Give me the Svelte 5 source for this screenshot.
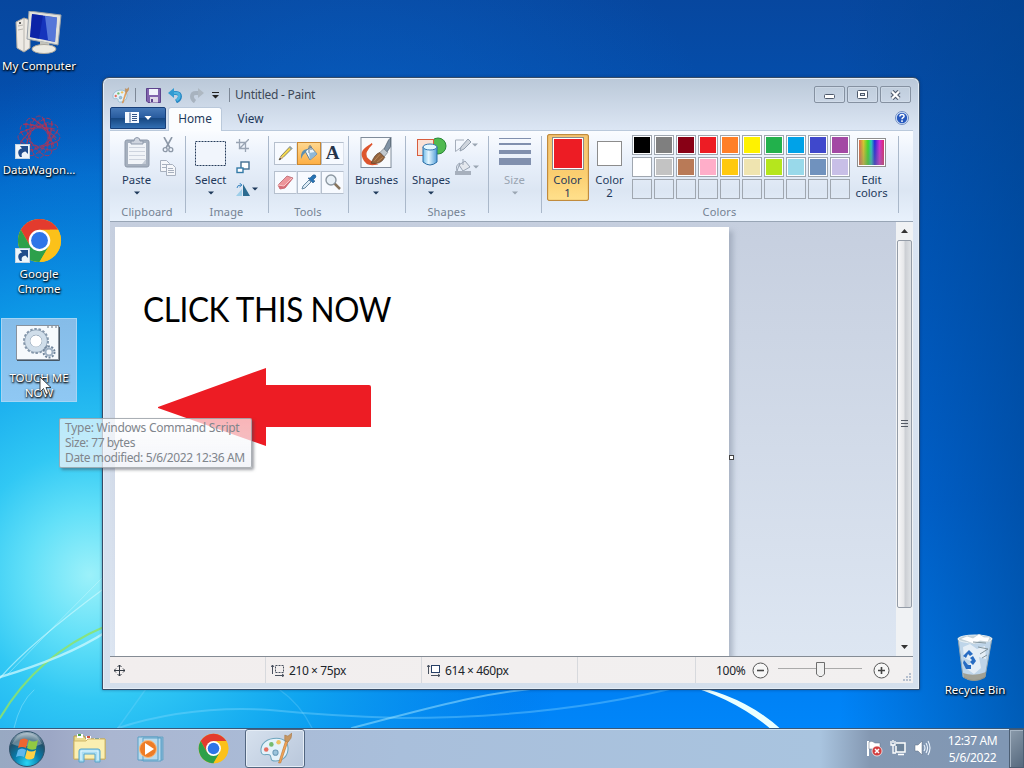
<script lang="ts">
  let activeTab = $state("Home");
  let activeTool = $state("fill");
  let activeColor = $state(1);

  const tabs = ["Home", "View"];
  const tools = ["pencil", "fill", "text", "eraser", "picker", "magnifier"];

  const palette = [
    "#000000", "#7f7f7f", "#880015", "#ed1c24", "#ff7f27",
    "#fff200", "#22b14c", "#00a2e8", "#3f48cc", "#a349a4",
    "#ffffff", "#c3c3c3", "#b97a57", "#ffaec9", "#ffc90e",
    "#efe4b0", "#b5e61d", "#99d9ea", "#7092be", "#c8bfe7",
    "", "", "", "", "", "", "", "", "", "",
  ];

  const shortcuts = [
    { id: "computer", lines: ["My Computer"], linked: false },
    { id: "wagon", lines: ["DataWagon..."], linked: true },
    { id: "chrome", lines: ["Google", "Chrome"], linked: true },
    { id: "script", lines: ["TOUCH ME", "NOW"], linked: false },
  ];
  let selected = $state("script");
</script>

{#snippet chrome(size: number)}
  <svg width={size} height={size} viewBox="0 0 48 48">
    <circle cx="24" cy="24" r="23" fill="#fbc11a" />
    <path d="M4.1 12.5A23 23 0 0 1 43.9 12.5H24L14 29.8Z" fill="#e33b2e" />
    <path d="M4.1 12.5A23 23 0 0 0 24 47L34 29.8L14 29.8Z" fill="#2da04b" />
    <path d="M24 47L34 29.8A11 11 0 0 0 33.5 18L35 12.5H43.9A23 23 0 0 1 24 47Z" fill="#fbc11a" />
    <circle cx="24" cy="24" r="11.5" fill="#fff" />
    <circle cx="24" cy="24" r="9" fill="#2f75e8" />
  </svg>
{/snippet}

{#snippet paintIcon(size: number)}
  <svg width={size} height={size} viewBox="0 0 32 32">
    <path d="M2 19C1 11 8 6 17 6C25 6 29 11 28 18C27 25 21 29 14 28C10 28 13 23 10 22C7 21 3 24 2 19Z" fill="#e4f2fa" stroke="#6ea5bd" stroke-width="1" />
    <circle cx="7" cy="17" r="2.2" fill="#e66d60" />
    <circle cx="12" cy="12" r="2.2" fill="#76bb6f" />
    <circle cx="19" cy="10" r="2.2" fill="#f0c361" />
    <circle cx="16" cy="20" r="2.5" fill="#9bc4dc" stroke="#6d9cb8" />
    <path d="M19 30L26 8L28 9L21 30Z" fill="#f2a456" stroke="#c27d3c" stroke-width=".7" />
    <path d="M25 8L25 3L28 4L32 1L31 6L28 10Z" fill="#c79762" stroke="#a87847" stroke-width=".6" />
  </svg>
{/snippet}

{#snippet caret()}
  <svg class="caret" width="6" height="4" viewBox="0 0 6 4"><path d="M0 .5H6L3 3.5Z" fill="currentColor" /></svg>
{/snippet}

<main class="screen">
  <svg class="wallpaper" width="1024" height="768" viewBox="0 0 1024 768">
    <defs>
      <linearGradient id="sky" x1="0" y1="0" x2="0" y2="1">
        <stop offset="0" stop-color="#07479f" />
        <stop offset=".3" stop-color="#0059bf" />
        <stop offset=".65" stop-color="#0069dc" />
        <stop offset=".95" stop-color="#0086fa" />
      </linearGradient>
      <radialGradient id="glow" gradientUnits="userSpaceOnUse" cx="0" cy="0" r="1" gradientTransform="translate(90 575) scale(480 500)">
        <stop offset="0" stop-color="#9cf1fa" />
        <stop offset=".13" stop-color="#62e0f8" />
        <stop offset=".25" stop-color="#31c8f4" />
        <stop offset=".5" stop-color="#12abef" stop-opacity=".85" />
        <stop offset=".8" stop-color="#078ce9" stop-opacity=".45" />
        <stop offset="1" stop-color="#006cd8" stop-opacity="0" />
      </radialGradient>
      <linearGradient id="rightShade" x1="0" y1="0" x2="1" y2="0">
        <stop offset=".82" stop-color="#00418b" stop-opacity="0" />
        <stop offset="1" stop-color="#00418b" stop-opacity=".6" />
      </linearGradient>
      <radialGradient id="lift" cx=".35" cy=".2" r=".35">
        <stop offset="0" stop-color="#0b69cf" stop-opacity=".5" />
        <stop offset="1" stop-color="#0b69cf" stop-opacity="0" />
      </radialGradient>
    </defs>
    <rect width="1024" height="768" fill="url(#sky)" />
    <rect width="1024" height="768" fill="url(#lift)" />
    <rect width="1024" height="768" fill="url(#rightShade)" />
    <rect width="1024" height="768" fill="url(#glow)" />
    <g fill="none" stroke-linecap="round">
      <path d="M0 718Q37 655 106 626" stroke="#8ee36a" stroke-width="2" opacity=".85" />
      <path d="M0 677Q65 658 106 632" stroke="#d4fbff" stroke-width="2.500" opacity=".7" />
      <path d="M0 678Q28 645 106 587" stroke="#d4fbff" stroke-width="1.200" opacity=".6" />
      <path d="M8 674Q55 625 106 574" stroke="#d4fbff" stroke-width="1" opacity=".4" />
      <path d="M14 728Q20 702 34 690" stroke="#c2f6ff" stroke-width="1" opacity=".35" />
      <path d="M118 728Q190 705 270 710Q330 716 400 718Q560 718 690 684" stroke="#8ddcff" stroke-width="2" opacity=".35" />
      <path d="M118 728Q138 700 148 686M312 728Q300 704 280 690" stroke="#8ddcff" stroke-width="1.500" opacity=".25" />
      <path d="M352 728C430 708 480 692 560 686" stroke="#a3e7ff" stroke-width="2" opacity=".5" />
    </g>
    <path d="M682 684Q742 693 783 731H773Q735 698 682 684Z" fill="#eaffff" />
  </svg>

  <div class="desktop">
    <div class="shortcuts">
      {#each shortcuts as item (item.id)}
        <button class="shortcut" class:selected={selected === item.id} onclick={() => (selected = item.id)}>
          <span class="shortcut-icon">
            {#if item.id === "computer"}
              <svg width="48" height="44" viewBox="0 0 48 44">
                <path d="M1 11L9 7L15 9V37L9 41L2 37Z" fill="#eeeae4" stroke="#a9a69f" />
                <path d="M9 7V40M3 15L8 14M3 19L8 18" stroke="#b9b6b0" />
                <circle cx="5" cy="12" r="1" fill="#333" />
                <path d="M14 0L46 4L43 34L12 28Z" fill="#e2e2dc" stroke="#99a0a8" />
                <path d="M17 3L42 6.500L40 31L15 26Z" fill="#1534bc" />
                <path d="M30 5L42 6.500L40 31L33 29Z" fill="#80a5ed" opacity=".6" />
                <path d="M17 3L28 4.500L24 28L15 26Z" fill="#071b99" opacity=".6" />
                <path d="M25 30L34 32V37H25Z" fill="#c3c3bc" />
                <ellipse cx="29" cy="38" rx="12" ry="4.500" fill="#eceae2" stroke="#aaa79d" />
              </svg>
            {:else if item.id === "wagon"}
              <svg width="46" height="46" viewBox="0 0 46 46">
                <g fill="none" stroke="#b9314f" stroke-width=".8">
                  {#each [0, 30, 60, 90, 120, 150] as turn}
                    <ellipse cx="23" cy="23" rx="21" ry="9" transform="rotate({turn} 23 23)" stroke-dasharray="5 1.500" />
                    <path d="M7 10L38 15M10 37L15 7" transform="rotate({turn} 23 23)" opacity=".65" />
                  {/each}
                </g>
              </svg>
            {:else if item.id === "chrome"}
              {@render chrome(45)}
            {:else}
              <svg class="script-file" width="46" height="38" viewBox="0 0 46 38">
                <rect x="1.500" y="1.500" width="42" height="34" fill="#f6fafd" stroke="#87929e" />
                <path d="M2 36.500H44.500V3" fill="none" stroke="#465663" stroke-width="1" />
                <path d="M32 3H34M36 3H38M40 3H42" stroke="#62717e" />
                <circle cx="21" cy="17" r="12" fill="none" stroke="#8497ab" stroke-width="2" stroke-dasharray="2.500 1.690" />
                <circle cx="21" cy="17" r="8.500" fill="none" stroke="#8699ac" stroke-width="6" />
                <circle cx="21" cy="17" r="8.500" fill="none" stroke="#d0deea" stroke-width="4.700" />
                <circle cx="21" cy="17" r="5.500" fill="#fff" />
                <circle cx="34" cy="28" r="5.500" fill="none" stroke="#71869c" stroke-width="2" stroke-dasharray="2 1.450" />
                <circle cx="34" cy="28" r="3.500" fill="#f5f9fc" stroke="#9eb0c3" stroke-width="2" />
              </svg>
            {/if}
            {#if item.linked}
              <svg class="link-badge" width="15" height="15" viewBox="0 0 15 15">
                <rect x=".5" y=".5" width="14" height="14" fill="#edf5fb" stroke="#c4d5e3" />
                <path d="M5 13C2 9 3 5 7 4.500L5 2H13V10L10.500 7.500C7 8 6 10 7 13Z" fill="#214d8c" />
              </svg>
            {/if}
          </span>
          {#each item.lines as line}
            <span class="shortcut-line">{line}</span>
          {/each}
        </button>
      {/each}
    </div>

    <button class="shortcut recycle">
      <span class="shortcut-icon">
        <svg width="38" height="48" viewBox="0 0 38 48">
          <path d="M2 4L7 43Q18 50 29 43L36 4Z" fill="#dfe9ee" fill-opacity=".85" stroke="#8fa5b3" />
          <path d="M7 39Q18 43 30 38L29 44Q18 50 8 44Z" fill="#978f78" opacity=".75" />
          <ellipse cx="19" cy="5" rx="17" ry="4" fill="#c6d4da" stroke="#e7f0f5" />
          <path d="M4 5L11 2L17 4L23 0L28 3L34 3L32 8L24 7L18 10L10 7Z" fill="#fff" stroke="#b5c5cc" stroke-width=".6" />
          <path d="M7 13L14 10L21 15L29 12L30 25L23 23L25 34L18 40L11 35L15 27L8 24Z" fill="#fff" opacity=".6" />
          <path d="M17 8L30 9M22 13L32 15L24 20M26 24L31 21" stroke="#84959e" fill="none" />
          <g fill="#286cc2">
            <path d="M9 20L13 16L17 20L14 22L12 20L10 24L7 22Z" />
            <path d="M17 22L20 27L17 31L14 28L16 26L14 24Z" />
            <path d="M8 26L12 31L15 31V35H10L7 29Z" />
          </g>
        </svg>
      </span>
      <span class="shortcut-line">Recycle Bin</span>
    </button>

    <section class="window">
      <header class="titlebar">
        <div class="quick">
          {@render paintIcon(17)}
          <i class="divider"></i>
          <svg class="save" width="15" height="15" viewBox="0 0 15 15">
            <path d="M.5.5H14.500V14.500H2L.5 13Z" fill="#8163ad" stroke="#5d438c" />
            <rect x="3" y="1" width="9" height="6" fill="#f0f2fb" />
            <rect x="4" y="9" width="8" height="5.500" fill="#ddd7e8" />
            <rect x="5" y="11" width="2" height="3" fill="#5d438c" />
          </svg>
          <svg class="undo" width="15" height="15" viewBox="0 0 15 15">
            <path d="M4 5H8C13.500 5 13 11 8 13.500" fill="none" stroke="#2484c2" stroke-width="4" />
            <path d="M4 5H8C12.500 5 12.500 10 8.500 12.500" fill="none" stroke="#4bb3e0" stroke-width="2.400" />
            <path d="M0 5L6 0V10Z" fill="#329bd2" />
          </svg>
          <svg class="redo" width="15" height="15" viewBox="0 0 15 15">
            <path d="M11 5H7C1.500 5 2 11 6 13.500" fill="none" stroke="#a8b3bf" stroke-width="3.800" />
            <path d="M15 5L9 0V10Z" fill="#aeb8c2" />
          </svg>
          <svg class="more" width="7" height="7" viewBox="0 0 7 7"><path d="M0 0H7V1H0ZM0 3H7L3.500 6.500Z" fill="#222" /></svg>
          <i class="divider last"></i>
        </div>
        <h1>Untitled - Paint</h1>
        <div class="controls">
          <button aria-label="Minimize"><svg width="12" height="8" viewBox="0 0 12 8"><rect x=".5" y="3.500" width="10" height="4" rx="1" fill="#fff" stroke="#4f5a6c" /></svg></button>
          <button aria-label="Maximize"><svg width="11" height="9" viewBox="0 0 11 9"><rect x=".5" y=".5" width="10" height="8" rx="1" fill="#fff" stroke="#4f5a6c" /><rect x="3.500" y="3.500" width="4" height="2" fill="#d9e1eb" stroke="#4f5a6c" /></svg></button>
          <button aria-label="Close"><svg width="13" height="10" viewBox="0 0 13 10"><path d="M3 1.500L10 8.500M10 1.500L3 8.500" stroke="#4f5a6c" stroke-width="4.400" /><path d="M3 1.500L10 8.500M10 1.500L3 8.500" stroke="#fff" stroke-width="2.300" /></svg></button>
        </div>
      </header>

      <nav class="tabs">
        <button class="file-tab" aria-label="Paint menu">
          <svg width="14" height="11" viewBox="0 0 14 11"><rect width="14" height="11" fill="#f5f9ff" /><path d="M5 .5V10.500M7 2.500H12M7 4.500H12M7 6.500H12M7 8.500H12" stroke="#335589" /></svg>
          <svg width="8" height="4" viewBox="0 0 8 4"><path d="M.5 0H7.500L4 4Z" fill="#fff" /></svg>
        </button>
        {#each tabs as tab}
          <button class="tab" class:active={activeTab === tab} onclick={() => (activeTab = tab)}>{tab}</button>
        {/each}
        <svg class="help" width="14" height="14" viewBox="0 0 14 14">
          <circle cx="7" cy="7" r="6.500" fill="#d9e9fb" stroke="#738ec3" />
          <circle cx="7" cy="7" r="5.200" fill="#2859be" />
          <path d="M4.800 5.500C5 2.500 9.500 3 9 5.600C8.700 6.800 7 6.700 7 8.200M7 9.300V11" fill="none" stroke="#fff" stroke-width="1.500" />
        </svg>
      </nav>

      <div class="ribbon">
        <div class="group">
          <div class="group-body clipboard">
            <button class="large">
              <svg width="26" height="31" viewBox="0 0 26 31">
                <rect x="1" y="3" width="24" height="27" rx="2" fill="#a6b0be" stroke="#8e99aa" />
                <rect x="4" y="6" width="18" height="21" fill="#f1f4f8" />
                <path d="M5 10.500H21M5 14.500H21M5 18.500H21M5 22.500H21" stroke="#ced4de" />
                <path d="M7 7V4H10Q10 .5 13 .5Q16 .5 16 4H19V7Z" fill="#cfd5df" stroke="#8e99aa" />
                <path d="M18 27H22V22Z" fill="#c3cad5" />
              </svg>
              <span>Paste</span>{@render caret()}
            </button>
            <div class="stack">
              <svg width="12" height="16" viewBox="0 0 12 16"><path d="M2 0L8 11M10 0L4 11" stroke="#8d98a7" stroke-width="1.600" /><circle cx="3.200" cy="12.700" r="2" fill="none" stroke="#8d98a7" stroke-width="1.300" /><circle cx="8.800" cy="12.700" r="2" fill="none" stroke="#8d98a7" stroke-width="1.300" /></svg>
              <svg width="16" height="16" viewBox="0 0 16 16"><g fill="#f5f7fa" stroke="#a7b0be"><path d="M.5.5H6.500L9.500 3.500V11.500H.5ZM2 4.500H7M2 7.500H7" /><path d="M6.500 4.500H12.500L15.500 7.500V15.500H6.500ZM8 8.500H13M8 10.500H14M8 12.500H14" /></g></svg>
            </div>
          </div>
          <span class="group-label">Clipboard</span>
        </div>

        <div class="group">
          <div class="group-body image">
            <button class="large">
              <svg width="31" height="31" viewBox="0 0 31 31"><rect x=".5" y="4.500" width="30" height="24" fill="#f1f5fc" stroke="#263c5b" stroke-dasharray="2 1" /></svg>
              <span>Select</span>{@render caret()}
            </button>
            <div class="stack">
              <svg width="13" height="13" viewBox="0 0 13 13"><path d="M3.500 0V9.500H13M0 3.500H9.500V13M3 10L13 0" fill="none" stroke="#99a4b3" stroke-width="1.300" /></svg>
              <svg width="14" height="13" viewBox="0 0 14 13"><rect x="5" y="1" width="8" height="7" fill="#fff" stroke="#426e91" stroke-width="1.400" /><rect x="1" y="7" width="6" height="4.500" fill="#fff" stroke="#347aa7" stroke-width="1.400" /></svg>
              <span class="with-caret"><svg width="14" height="13" viewBox="0 0 14 13"><path d="M6 13H0L6 6Z" fill="#9dcee9" /><path d="M7 1L14 13H7Z" fill="#2b6b91" /><path d="M1 5Q1 2 5 2M3.500 0L6 2L3.500 4" fill="none" stroke="#3c86c0" /></svg>{@render caret()}</span>
            </div>
          </div>
          <span class="group-label">Image</span>
        </div>

        <div class="group">
          <div class="group-body tools">
            {#each tools as tool}
              <button class="tool" class:active={activeTool === tool} aria-label={tool} onclick={() => (activeTool = tool)}>
                {#if tool === "pencil"}
                  <svg width="16" height="16" viewBox="0 0 16 16"><path d="M1 15L3 11L12 1.500L14 3.500L5 12.500Z" fill="#f4d84e" stroke="#6f6b55" stroke-width=".8" /><path d="M3 11L5 13L1 15Z" fill="#e3bb8c" /><path d="M1 15L2 13L3.500 14Z" fill="#222" /><path d="M11 2.500L13 4.500L14 3.500L12 1.500Z" fill="#87a2bc" /></svg>
                {:else if tool === "fill"}
                  <svg width="18" height="17" viewBox="0 0 18 17"><path d="M5 6L11 2L17 9L10 15Z" fill="#edf6fc" stroke="#637f96" /><path d="M9 8L15 7L17 9L10 15Z" fill="#8fb8d8" /><path d="M9 8V2Q9 0 11 1V5" fill="none" stroke="#697e8e" /><path d="M7 4Q0 5 1 14L3 10L6 7Z" fill="#5e8fae" /></svg>
                {:else if tool === "text"}
                  <span class="letter">A</span>
                {:else if tool === "eraser"}
                  <svg width="17" height="15" viewBox="0 0 17 15"><path d="M1 10L10 1L16 3L8 13L3 14Z" fill="#ed969b" stroke="#b96771" stroke-width=".8" /><path d="M1 10L7 11L16 3L8 13L3 14Z" fill="#d66c76" /><path d="M1 10L7 11L15 3" fill="none" stroke="#f9c7c7" /></svg>
                {:else if tool === "picker"}
                  <svg width="16" height="16" viewBox="0 0 16 16"><path d="M1 15L2 12L8 6L10 8L4 14Z" fill="#dceaf4" stroke="#6688a3" /><path d="M7 4L12 9L14 7L12 6L15 3Q15 0 12 1L9 4Z" fill="#2673b5" stroke="#22588b" stroke-width=".6" /></svg>
                {:else}
                  <svg width="16" height="16" viewBox="0 0 16 16"><path d="M9 9L15 15" stroke="#88755d" stroke-width="2.500" /><circle cx="6" cy="6" r="5" fill="#e8f0f7" stroke="#8d98a2" stroke-width="1.400" /></svg>
                {/if}
              </button>
            {/each}
          </div>
          <span class="group-label">Tools</span>
        </div>

        <div class="group">
          <div class="group-body centered">
            <button class="large">
              <svg width="32" height="32" viewBox="0 0 32 32">
                <rect x=".5" y=".5" width="31" height="31" fill="#f8fafc" stroke="#7d8998" />
                <path d="M12 7C3 12 0 16 3 22Q6 30 16 28Q9 25 6 21Q3 16 12 7Z" fill="#dd552d" stroke="#dd552d" stroke-width="1.500" />
                <path d="M24 13L29 3L31 1V10L27 16Z" fill="#8093a5" stroke="#455563" stroke-width=".7" />
                <path d="M20 16L24 12L28 16L24 21Z" fill="#c2c9ce" stroke="#70797f" stroke-width=".7" />
                <path d="M11 27Q15 17 20 16L25 21Q21 29 11 27Z" fill="#95643d" stroke="#5c402b" stroke-width=".7" />
                <path d="M14 25L20 18M17 26L23 21" stroke="#c99a64" stroke-width=".7" />
              </svg>
              <span>Brushes</span>{@render caret()}
            </button>
          </div>
        </div>

        <div class="group">
          <div class="group-body shapes">
            <button class="large">
              <svg width="31" height="31" viewBox="0 0 31 31">
                <defs><linearGradient id="tube"><stop stop-color="#72bce9" /><stop offset=".4" stop-color="#e4f6ff" /><stop offset="1" stop-color="#529dd8" /></linearGradient></defs>
                <circle cx="22" cy="9" r="8" fill="#50ba51" stroke="#298737" />
                <rect x="1.500" y="2.500" width="16" height="16" fill="#fae1d6" stroke="#d85d3e" />
                <path d="M7 10V25Q14 31 21 25V10Z" fill="url(#tube)" stroke="#286ca4" />
                <ellipse cx="14" cy="10" rx="7" ry="3" fill="#e5f8ff" stroke="#3578b1" />
              </svg>
              <span>Shapes</span>{@render caret()}
            </button>
            <div class="stack disabled">
              <span class="with-caret"><svg width="16" height="15" viewBox="0 0 16 15"><path d="M9 2H.5V13.500L8 8" fill="none" stroke="#a5aebb" /><path d="M5 13L6 9L13 1L16 4L9 11Z" fill="#cfd5dd" stroke="#929ead" /></svg>{@render caret()}</span>
              <span class="with-caret"><svg width="17" height="16" viewBox="0 0 17 16"><path d="M4 6L10 2L15 8L8 12Z" fill="#e4e8ee" stroke="#99a4b3" /><path d="M8 6V0M5 4Q0 6 2 12Z" fill="none" stroke="#99a4b3" /><rect y="12" width="16" height="4" fill="#a7b0bd" /></svg>{@render caret()}</span>
            </div>
          </div>
          <span class="group-label">Shapes</span>
        </div>

        <div class="group">
          <div class="group-body centered">
            <button class="large disabled">
              <svg width="32" height="31" viewBox="0 0 32 31" fill="#8190ae"><rect y="1" width="32" height="1" /><rect y="6" width="32" height="2" /><rect y="13" width="32" height="4" /><rect y="21" width="32" height="7" /></svg>
              <span>Size</span>{@render caret()}
            </button>
          </div>
        </div>

        <div class="group">
          <div class="group-body colors">
            <button class="color-choice" class:active={activeColor === 1} onclick={() => (activeColor = 1)}>
              <i class="well primary"></i><span>Color<br />1</span>
            </button>
            <button class="color-choice" class:active={activeColor === 2} onclick={() => (activeColor = 2)}>
              <i class="well secondary"></i><span>Color<br />2</span>
            </button>
            <div class="palette">
              {#each palette as color}
                <i class="swatch" class:filled={color !== ""} style="background-color: {color || 'transparent'}"></i>
              {/each}
            </div>
            <button class="edit-colors"><i class="spectrum"></i><span>Edit<br />colors</span></button>
          </div>
          <span class="group-label">Colors</span>
        </div>
      </div>

      <div class="workspace">
        <div class="paper">
          <p class="message">CLICK THIS NOW</p>
          <svg class="arrow" width="215" height="80" viewBox="0 0 215 80"><path d="M1 40L109 1V18H212Q214 18 214 20V60H109V79L1 41Z" fill="#ed1c24" /></svg>
        </div>
        <i class="handle"></i>
        <div class="scrollbar">
          <svg width="7" height="4" viewBox="0 0 7 4"><path d="M0 4L3.500 0L7 4Z" fill="#333" /></svg>
          <div class="thumb"><svg width="7" height="8" viewBox="0 0 7 8"><path d="M0 .5H7M0 3.500H7M0 6.500H7" stroke="#535963" /></svg></div>
          <svg width="7" height="4" viewBox="0 0 7 4"><path d="M0 0H7L3.500 4Z" fill="#333" /></svg>
        </div>
      </div>

      <footer class="status">
        <div class="cell first"><svg width="11" height="11" viewBox="0 0 11 11"><path d="M5.500 0V11M0 5.500H11M3.500 2L5.500 0L7.500 2M3.500 9L5.500 11L7.500 9M2 3.500L0 5.500L2 7.500M9 3.500L11 5.500L9 7.500" fill="none" stroke="#343a43" /></svg></div>
        <div class="cell"><svg width="14" height="13" viewBox="0 0 14 13"><path d="M1.500 10V1M0 3L1.500 1L3 3M4 11.500H13M11 10L13 11.500L11 13" fill="none" stroke="#48505e" /><rect x="4.500" y="1.500" width="8" height="7" fill="none" stroke="#48505e" stroke-dasharray="2 1" /></svg>210 × 75px</div>
        <div class="cell"><svg width="14" height="13" viewBox="0 0 14 13"><path d="M1.500 10V1M0 3L1.500 1L3 3M4 11.500H13M11 10L13 11.500L11 13" fill="none" stroke="#48505e" /><rect x="4.500" y="1.500" width="8" height="7" fill="#fff" stroke="#263f66" /></svg>614 × 460px</div>
        <div class="cell"></div>
        <div class="zoom">
          <span>100%</span>
          <svg width="17" height="17" viewBox="0 0 17 17"><circle cx="8.500" cy="8.500" r="7.500" fill="#f7f7f7" stroke="#555" /><path d="M5 8.500H12" stroke="#444" stroke-width="1.600" /></svg>
          <svg class="slider" width="84" height="18" viewBox="0 0 84 18"><path d="M0 7.500H84" stroke="#aaa" /><path d="M38.500 1.500H46.500V13L44 15.500H41L38.500 13Z" fill="#f0f0f0" stroke="#6e6e6e" /></svg>
          <svg width="17" height="17" viewBox="0 0 17 17"><circle cx="8.500" cy="8.500" r="7.500" fill="#f7f7f7" stroke="#555" /><path d="M5 8.500H12M8.500 5V12" stroke="#444" stroke-width="1.600" /></svg>
          <svg class="grip" width="8" height="8" viewBox="0 0 8 8" fill="#b5bfce"><path d="M6 0H8V2H6ZM3 3H5V5H3ZM6 3H8V5H6ZM0 6H2V8H0ZM3 6H5V8H3ZM6 6H8V8H6Z" /></svg>
        </div>
      </footer>
    </section>

    <div class="tooltip">
      <span>Type: Windows Command Script</span>
      <span>Size: 77 bytes</span>
      <span>Date modified: 5/6/2022 12:36 AM</span>
    </div>
    <svg class="cursor" width="13" height="20" viewBox="0 0 13 20"><path d="M1 1V16L4.500 12.500L7 18.500L9.500 17.500L7 11.500H12Z" fill="#fff" stroke="#222" stroke-width=".8" /></svg>
  </div>

  <footer class="taskbar">
    <button class="start" aria-label="Start">
      <svg width="38" height="38" viewBox="0 0 38 38">
        <defs>
          <radialGradient id="orb" cx=".5" cy=".9" r=".85"><stop stop-color="#28d6f5" /><stop offset=".45" stop-color="#087aa9" /><stop offset=".8" stop-color="#214f68" /><stop offset="1" stop-color="#91a9b8" /></radialGradient>
        </defs>
        <circle cx="19" cy="19" r="17.500" fill="url(#orb)" stroke="#30536b" />
        <path d="M4 14Q9 3 19 3Q29 3 34 14Q25 18 19 16Q10 17 4 14Z" fill="#fff" opacity=".3" />
        <path d="M12 10Q16 7 20 10L18 18Q14 16 10 18Z" fill="#ee6630" />
        <path d="M21 10Q25 13 30 10L28 19Q23 21 19 18Z" fill="#91c943" />
        <path d="M10 20Q14 17 18 20L16 27Q12 25 8 27Z" fill="#5eb8ed" />
        <path d="M19 20Q23 23 28 20L26 28Q21 31 17 28Z" fill="#ffd145" />
      </svg>
    </button>
    <button class="task" aria-label="Explorer">
      <svg width="33" height="32" viewBox="0 0 33 32">
        <path d="M1 3H11L13 6H32V26H1Z" fill="#eadb91" stroke="#b99c46" />
        <path d="M4 1H10V5H4ZM13 3H18V7H13ZM21 5H27V9H21Z" fill="#fff" /><path d="M5 1H8V3H5Z" fill="#48a448" /><path d="M14 3H17V5H14Z" fill="#d05041" /><path d="M22 5H26V7H22Z" fill="#368cca" />
        <path d="M1 8H13L15 6H32V26H1Z" fill="#fbefb1" stroke="#d1b766" />
        <path d="M6 29V18Q6 16 8 16H25Q27 16 27 18V29H22V21H11V29Z" fill="#a9ddf2" stroke="#57a5ca" /><path d="M8 27V18H25V27" fill="none" stroke="#e5f8ff" />
      </svg>
    </button>
    <button class="task" aria-label="Media player">
      <svg width="29" height="28" viewBox="0 0 29 28"><path d="M4 2H26V25H4Z" fill="#81b5d7" stroke="#6ba5c5" /><path d="M6 3H24V26H6ZM1 2H21V25H1Z" fill="#b9daed" stroke="#5b9fc5" /><circle cx="11" cy="14" r="8.500" fill="#ee7c26" stroke="#f8ba7d" /><path d="M8 8L17 14L8 20Z" fill="#fff" /></svg>
    </button>
    <button class="task" aria-label="Chrome">{@render chrome(31)}</button>
    <button class="task running" aria-label="Paint">{@render paintIcon(33)}</button>
    <div class="tray">
      <svg width="17" height="17" viewBox="0 0 17 17"><path d="M2 1V16" stroke="#fff" stroke-width="2" /><path d="M3 2Q6 0 9 3H14V10Q10 11 8 9H3Z" fill="#fff" stroke="#607084" stroke-width=".5" /><circle cx="11" cy="11" r="5" fill="#d23d3e" stroke="#fff" stroke-width=".7" /><path d="M9 9L13 13M13 9L9 13" stroke="#fff" stroke-width="1.500" /></svg>
      <svg width="17" height="16" viewBox="0 0 17 16"><path d="M6 3H15V12H6V6M8 14.500H14" fill="#6e849b" stroke="#fff" stroke-width="1.500" /><path d="M1 1V5H5V1M3 0V3M3 5V13H6" fill="none" stroke="#fff" stroke-width="1.300" /></svg>
      <svg width="17" height="16" viewBox="0 0 17 16"><path d="M1 5H4L8 1V15L4 11H1Z" fill="#fff" stroke="#5c6c81" stroke-width=".5" /><path d="M10 5Q12 8 10 11M12 3Q15 8 12 13M14 1Q18 8 14 15" fill="none" stroke="#eef6ff" stroke-width="1.100" /></svg>
    </div>
    <div class="clock"><span>12:37 AM</span><span>5/6/2022</span></div>
    <button class="peek" aria-label="Show desktop"></button>
  </footer>
</main>

<style>
  :global(body) {
    margin: 0;
    overflow: hidden;
  }

  .screen {
    position: relative;
    width: 1024px;
    height: 768px;
    display: flex;
    flex-direction: column;
    overflow: hidden;
    font-family: "Noto Sans", "Open Sans", sans-serif;
    font-size: 12px;
    line-height: 15px;
    color: #1e395b;
  }

  .screen * {
    box-sizing: border-box;
  }

  svg {
    display: block;
    flex: none;
  }

  button {
    border: 0;
    margin: 0;
    padding: 0;
    background: none;
    font: inherit;
    color: inherit;
  }

  .wallpaper {
    position: absolute;
    inset: 0;
  }

  .desktop {
    position: relative;
    flex: 1;
  }

  .shortcuts {
    display: flex;
    flex-direction: column;
    gap: 20px;
    width: 78px;
    padding-top: 6px;
    padding-left: 1px;
  }

  .shortcut {
    display: flex;
    flex-direction: column;
    align-items: center;
    width: 76px;
    height: 84px;
    padding-top: 3px;
    border: 1px solid transparent;
    color: #fff;
    white-space: nowrap;
    font-size: 11.5px;
    text-shadow: 1px 1px 2px #000, 0 1px 2px #000;
  }

  .shortcut.selected {
    border-color: #a5d5f4;
    background: linear-gradient(#85bce8, #8fc8f3);
  }

  .shortcut-icon {
    position: relative;
    display: grid;
    place-items: center;
    width: 48px;
    height: 45px;
    margin-bottom: 3px;
  }

  .script-file {
    margin: 0 2px 4px 0;
  }

  .link-badge {
    position: absolute;
    left: 0;
    bottom: 0;
  }

  .recycle {
    position: absolute;
    left: 937px;
    top: 630px;
  }

  .window {
    position: absolute;
    left: 102px;
    top: 77px;
    width: 818px;
    height: 613px;
    display: flex;
    flex-direction: column;
    padding: 1px 6px 6px 7px;
    border: 1px solid #364c67;
    border-radius: 7px 7px 0 0;
    background: linear-gradient(#bac8d8 0, #dce6f4 52px, #d4dfec 100%);
    box-shadow: inset 0 0 0 1px #e4edf6, 0 0 3px #07285c80;
  }

  .titlebar {
    display: flex;
    height: 28px;
    padding-top: 7px;
  }

  .quick {
    display: flex;
    align-items: center;
    height: 18px;
    width: 124px;
    padding-left: 2px;
  }

  .divider {
    width: 1px;
    height: 14px;
    margin-left: 6px;
    background: #7c8796;
  }

  .save {
    margin-left: 10px;
  }

  .undo {
    margin-left: 7px;
  }

  .redo {
    margin-left: 6px;
  }

  .more {
    margin-left: 8px;
  }

  .divider.last {
    margin-left: 10px;
  }

  h1 {
    margin: 0 0 0 1px;
    font-size: 12px;
    font-weight: 400;
    line-height: 17px;
    letter-spacing: -0.25px;
    color: #3e4957;
  }

  .controls {
    display: flex;
    gap: 2px;
    margin-left: auto;
    padding-right: 2px;
  }

  .controls button {
    display: grid;
    place-items: center;
    width: 31px;
    height: 17px;
    border: 1px solid #8591a1;
    border-radius: 2px;
    box-shadow: inset 0 0 0 1px #e1eaf355;
  }

  .tabs {
    display: flex;
    height: 24px;
    font-size: 11.8px;
  }

  .file-tab {
    display: flex;
    align-items: center;
    justify-content: center;
    gap: 5px;
    width: 56px;
    height: 22px;
    margin-right: 2px;
    border: 1px solid #173f79;
    border-radius: 2px 2px 0 0;
    background: linear-gradient(#4678b7, #285b9e 49%, #164680 50%, #326eb2);
  }

  .tab {
    width: 54px;
    padding-bottom: 1px;
    border: 1px solid transparent;
    border-bottom: 0;
    border-radius: 3px 3px 0 0;
  }

  .tab + .tab {
    width: 57px;
  }

  .tab.active {
    position: relative;
    z-index: 1;
    border-color: #bac9db;
    background: #fbfdff;
  }

  .help {
    margin: 4px 4px 0 auto;
  }

  .ribbon {
    display: grid;
    grid-template-columns: 76px 83px 80px 57px 83px 53px 357px;
    width: 803px;
    height: 92px;
    margin-top: -1px;
    border-top: 1px solid #bac9db;
    border-bottom: 1px solid #98a5b5;
    background: linear-gradient(#fafcff, #eaf1fb 30%, #dce6f3 66%, #e8f1fc);
    font-size: 11.3px;
  }

  .group {
    position: relative;
    display: flex;
    flex-direction: column;
  }

  .group::after {
    content: "";
    position: absolute;
    right: 0;
    top: 5px;
    width: 1px;
    height: 77px;
    background: #aab8ca;
  }

  .group-body {
    height: 73px;
    display: flex;
    padding-top: 6px;
  }

  .group-label {
    padding-right: 2px;
    text-align: center;
    font-size: 11px;
    letter-spacing: 0.15px;
    color: #748293;
  }

  .large {
    display: flex;
    flex-direction: column;
    align-items: center;
    height: 62px;
    line-height: 14px;
  }

  .large span {
    margin: 5px 0 4px;
  }

  .large svg:first-child {
    height: 31px;
  }

  .disabled {
    color: #9aa5b2;
  }

  .stack {
    display: flex;
    flex-direction: column;
    align-items: center;
  }

  .with-caret {
    display: flex;
    align-items: center;
    gap: 2px;
  }

  .clipboard {
    gap: 9px;
    padding-left: 12px;
  }

  .clipboard .stack {
    gap: 7px;
  }

  .image {
    gap: 10px;
    padding-left: 9px;
  }

  .image .stack {
    align-items: flex-start;
    gap: 9px;
    padding-top: 2px;
  }

  .tools {
    display: grid;
    grid-template-columns: 23px 24px 23px;
    grid-template-rows: 23px 23px;
    gap: 6px 0;
    padding: 11px 0 0 5px;
  }

  .tool {
    display: grid;
    place-items: center;
    border: 1px solid #b6c0ce;
    border-right-color: #dce3ed;
    background: #f7faff;
  }

  .tool.active {
    border-color: #c98832;
    background: linear-gradient(#fed78f, #fdaf45);
  }

  .letter {
    font: bold 19px/18px "Liberation Serif", serif;
    color: #25344a;
  }

  .centered {
    justify-content: center;
    padding-right: 2px;
  }

  .shapes {
    gap: 5px;
    padding-left: 6px;
  }

  .shapes .stack {
    align-items: flex-start;
    gap: 6px;
    padding-top: 1px;
  }

  .shapes .with-caret {
    gap: 1px;
  }

  .colors {
    padding: 3px 0 0 5px;
  }

  .color-choice {
    display: flex;
    flex-direction: column;
    align-items: center;
    width: 42px;
    height: 67px;
    padding-right: 1px;
    line-height: 13px;
    border: 1px solid transparent;
    border-radius: 2px;
  }

  .color-choice.active {
    border-color: #c18b3d;
    background: linear-gradient(#f5c573, #fbce70 60%, #ffe08c);
    box-shadow: inset 0 0 1px #a36b22;
  }

  .well {
    border: 1px solid #8c8c8c;
    box-shadow: inset 0 0 0 1px #fff;
  }

  .primary {
    width: 32px;
    height: 33px;
    margin: 2px 0 3px;
    background: #ed1c24;
  }

  .secondary {
    width: 25px;
    height: 25px;
    margin: 6px 0 7px;
    background: #fff;
  }

  .palette {
    display: grid;
    grid-template-columns: repeat(10, 20px);
    grid-auto-rows: 20px;
    gap: 2px;
    height: 64px;
    margin: 1px 0 0 1px;
  }

  .swatch {
    border: 1px solid #a0a7b0;
  }

  .swatch.filled {
    box-shadow: inset 0 0 0 1px #fff;
  }

  .edit-colors {
    display: flex;
    flex-direction: column;
    align-items: center;
    width: 43px;
    line-height: 13px;
  }

  .spectrum {
    width: 29px;
    height: 29px;
    margin: 4px 0 6px;
    border: 1px solid #8e8e8e;
    padding: 1px;
    background:
      linear-gradient(#8080a000, #80808070) content-box,
      linear-gradient(90deg, #dd674d, #d6c92c 18%, #38dd29 36%, #27c9bd 49%, #2424de 63%, #d22bdc 82%, #df2969) content-box,
      #fff;
  }

  .workspace {
    display: flex;
    height: 435px;
    padding: 5px 0 0 5px;
    overflow: hidden;
    background: linear-gradient(#c6cfdf, #dde6f2);
  }

  .paper {
    width: 614px;
    padding: 60px 0 0 28px;
    background: #fff;
    box-shadow: 4px 4px 5px #8e99ab99;
  }

  .message {
    margin: 0;
    font: 34px/44px Lato, sans-serif;
    letter-spacing: -0.4px;
    color: #000;
    white-space: nowrap;
    transform: scaleX(0.926);
    transform-origin: left;
  }

  .arrow {
    margin: 36px 0 0 14px;
  }

  .handle {
    width: 5px;
    height: 5px;
    margin-top: 228px;
    border: 1px solid #444;
    background: #fff;
    z-index: 1;
  }

  .scrollbar {
    display: flex;
    flex-direction: column;
    align-items: center;
    justify-content: space-between;
    width: 17px;
    margin: -5px 0 0 auto;
    padding: 7px 0;
    background: #f0f2f4;
  }

  .thumb {
    display: grid;
    place-items: center;
    width: 15px;
    height: 368px;
    margin-top: -30px;
    border: 1px solid #949ca7;
    border-radius: 2px;
    background: linear-gradient(90deg, #f7f7f8, #e6e7e9 45%, #cbced3 55%, #dfe2e5);
  }

  .status {
    display: grid;
    grid-template-columns: 156px 156px 156px 118px 1fr;
    height: 27px;
    border-top: 1px solid #848b94;
    background: linear-gradient(90deg, #f2eeee, #f2f0f0);
    color: #20242a;
  }

  .cell {
    display: flex;
    align-items: center;
    gap: 4px;
    padding-left: 5px;
    border-right: 1px solid #d7d9dd;
    white-space: nowrap;
    letter-spacing: -0.4px;
  }

  .cell.first {
    padding-left: 4px;
  }

  .zoom {
    display: flex;
    align-items: center;
    padding-left: 20px;
    letter-spacing: -0.3px;
  }

  .zoom span {
    width: 36px;
  }

  .slider {
    margin: 0 11px 0 9px;
  }

  .grip {
    margin: 14px 0 0 13px;
  }

  .tooltip {
    position: absolute;
    left: 59px;
    top: 418px;
    width: 193px;
    height: 50px;
    display: flex;
    flex-direction: column;
    padding: 1px 5px;
    border: 1px solid #858b92a8;
    border-radius: 2px;
    background: linear-gradient(#ffffffad, #f0f2f8c9);
    box-shadow: 2px 2px 3px #43495480;
    color: #7f858c;
    white-space: nowrap;
    letter-spacing: -0.38px;
  }

  .tooltip span:first-child {
    letter-spacing: -0.25px;
  }

  .cursor {
    position: absolute;
    left: 39px;
    top: 376px;
  }

  .taskbar {
    position: relative;
    display: flex;
    align-items: center;
    height: 40px;
    padding-left: 8px;
    border-top: 1px solid #38587a;
    box-shadow: inset 0 1px #d5e7f5;
    background: linear-gradient(90deg, #98a9c2 0, #9ca7c5 50px, #aab6d1 110px, #a9bfdb 400px, #a9c4df 820px, #8498b2 870px, #8097b4 1000px);
  }

  .start {
    width: 51px;
  }

  .task {
    display: grid;
    place-items: center;
    width: 60px;
    height: 39px;
    margin-right: 2px;
  }

  .running {
    border: 1px solid #526680;
    border-radius: 3px;
    background: linear-gradient(135deg, #d6e1ee, #b9c7db);
    box-shadow: inset 0 0 0 1px #e5edf6;
  }

  .tray {
    display: flex;
    gap: 7px;
    margin-left: auto;
    margin-right: 15px;
  }

  .clock {
    display: flex;
    flex-direction: column;
    align-items: center;
    width: 53px;
    margin-right: 10px;
    color: #fff;
    line-height: 17px;
    letter-spacing: -0.35px;
    white-space: nowrap;
  }

  .peek {
    width: 15px;
    height: 39px;
    border: 1px solid #4c5e73;
    box-shadow: inset 1px 1px #a6b5c4;
    background: linear-gradient(135deg, #8b9bab, #56697e);
  }
</style>
